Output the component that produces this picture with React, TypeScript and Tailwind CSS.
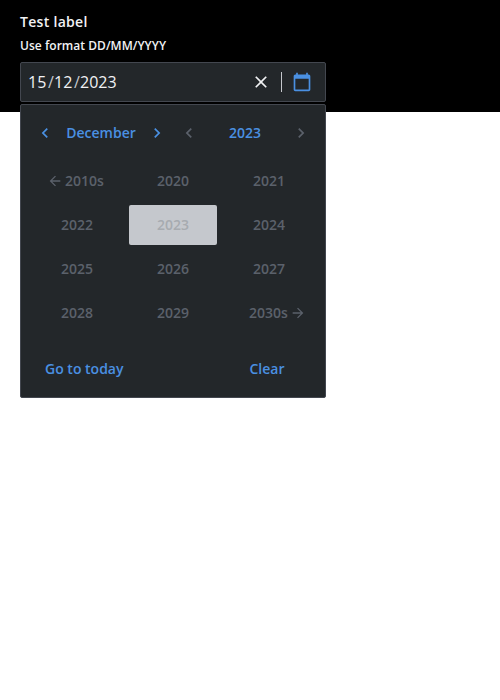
import React from 'react';

type IconProps = { d: string; className?: string };

function Icon({ d, className = 'size-5' }: IconProps) {
  return (
    <svg viewBox="0 0 24 24" fill="currentColor" className={className} aria-hidden="true">
      <path d={d} />
    </svg>
  );
}

const CLOSE = 'M19 6.41 17.59 5 12 10.59 6.41 5 5 6.41 10.59 12 5 17.59 6.41 19 12 13.41 17.59 19 19 17.59 13.41 12z';
const CALENDAR = 'M20 3h-1V1h-2v2H7V1H5v2H4c-1.1 0-2 .9-2 2v16c0 1.1.9 2 2 2h16c1.1 0 2-.9 2-2V5c0-1.1-.9-2-2-2zm0 18H4V8h16v13z';
const LEFT = 'M15.41 7.41 14 6l-6 6 6 6 1.41-1.41L10.83 12z';
const RIGHT = 'M10 6 8.59 7.41 13.17 12l-4.58 4.59L10 18l6-6z';
const BACK = 'M20 11H7.83l5.59-5.59L12 4l-8 8 8 8 1.41-1.41L7.83 13H20v-2z';
const FORWARD = 'm12 4-1.41 1.41L16.17 11H4v2h12.17l-5.58 5.59L12 20l8-8z';

const YEARS = ['2010s', '2020', '2021', '2022', '2023', '2024', '2025', '2026', '2027', '2028', '2029', '2030s'];

function yearStyle(year: string) {
  if (year === '2023') return 'bg-[#c5c8cd] text-[#a7abb0]';
  if (year === '2010s') return 'pr-[3px] text-[#5b616b]';
  if (year === '2030s') return 'pl-[17px] text-[#5b616b]';
  return 'text-[#5b616b]';
}

function Stepper({ label, disabled = false }: { label: string; disabled?: boolean }) {
  const tone = disabled ? 'text-[#5b616b]' : 'text-[#4a90e2]';
  return (
    <div className="flex h-10 w-[136px] items-center justify-between">
      <button disabled={disabled} aria-label="Previous" className={`flex size-6 items-center justify-center ${tone}`}>
        <Icon d={LEFT} />
      </button>
      <button className="text-[#4a90e2]">{label}</button>
      <button disabled={disabled} aria-label="Next" className={`flex size-6 items-center justify-center ${tone}`}>
        <Icon d={RIGHT} />
      </button>
    </div>
  );
}

export default function App() {
  return (
    <div className="min-h-screen bg-white font-['Open_Sans',sans-serif] text-sm leading-5 font-semibold text-[#f1f2f4]">
      <div className="h-[112px] bg-black px-5 pt-3">
        <div className="h-5 tracking-[0.3px]">Test label</div>
        <div className="mt-1.5 h-4 text-xs leading-4 tracking-[0.03px]">Use format DD/MM/YYYY</div>
        <div className="relative mt-2 w-[306px]">
          <div className="flex h-10 items-center rounded-[2px] border border-[#43474f] bg-[#23272a] pr-[13px] pl-[7px] font-normal">
            <div className="flex flex-1 text-base leading-6">
              <span className="w-5">15</span>
              <span className="w-1.5 text-[#c5c8cd]">/</span>
              <span className="w-5">12</span>
              <span className="w-1.5 text-[#c5c8cd]">/</span>
              <span>2023</span>
            </div>
            <Icon d={CLOSE} />
            <div className="mx-[10px] h-5 w-px bg-[#c5c8cd]" />
            <Icon d={CALENDAR} className="size-5 text-[#4a90e2]" />
          </div>
          <div className="absolute top-full left-0 mt-[2px] h-[294px] w-[306px] rounded-[2px] border border-[#43474f] bg-[#23272a] px-3 pt-2">
            <div className="flex gap-2">
              <Stepper label="December" />
              <Stepper label="2023" disabled />
            </div>
            <div className="mt-2 grid grid-cols-3 gap-x-2 gap-y-1">
              {YEARS.map((year) => (
                <button
                  key={year}
                  disabled
                  className={`flex h-10 items-center justify-center rounded-[2px] ${yearStyle(year)}`}
                >
                  {year === '2010s' && <Icon d={BACK} className="mr-0.5 size-4" />}
                  {year}
                  {year === '2030s' && <Icon d={FORWARD} className="ml-0.5 size-4" />}
                </button>
              ))}
            </div>
            <div className="mt-4 flex h-10 items-center justify-between text-[#4a90e2]">
              <button className="px-3">Go to today</button>
              <button className="w-[92px] text-center">Clear</button>
            </div>
          </div>
        </div>
      </div>
    </div>
  );
}
